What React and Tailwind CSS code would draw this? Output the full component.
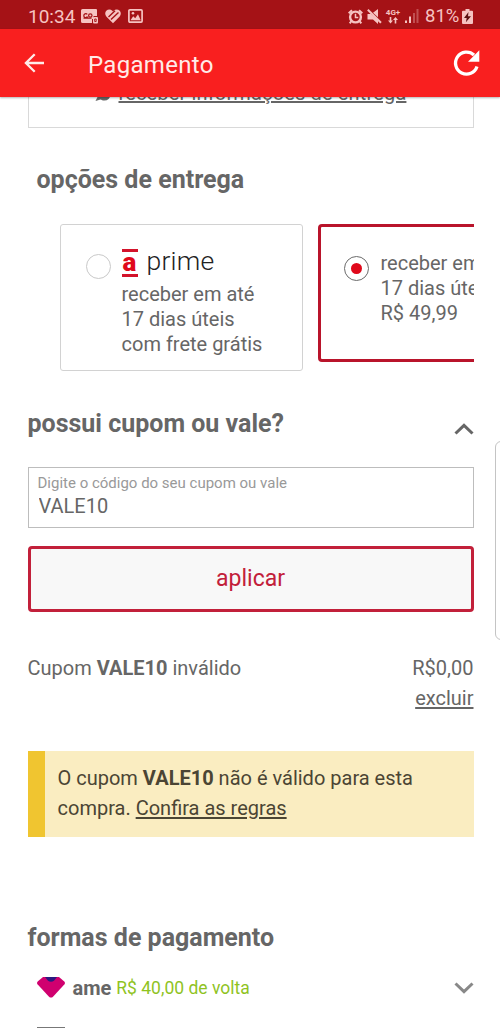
import React, { useState } from 'react';

const StatusBar = () => (
  <div className="flex h-[29px] items-center bg-[#a51216] pt-[3px] text-[#f6c3c1]">
    <span className="ml-[28px] w-[53px] text-[19px] leading-none">10:34</span>

    {/* Notification icons */}
    <svg className="h-[15px] w-[17px]" viewBox="0 0 17 15">
      <path
        fill="currentColor"
        d="M1.500 0h13.500a1 1 0 0 1 1 1v6h-3.500v3H11v4H1.500A1.500 1.500 0 0 1 0 12.500v-11A1.500 1.500 0 0 1 1.500 0z"
      />
      <rect x="12" y="8" width="5" height="6.500" rx="1" fill="currentColor" />
      <g fill="none" stroke="#a51216" strokeWidth="1.200">
        <path d="M6.300 5.300A2 2 0 1 0 6.300 8H5M2.500 9.200h8" />
        <circle cx="9.300" cy="6.500" r="1.700" />
        <path d="M13.700 10h1.500v2.500h-1.500z" strokeWidth="0.900" />
      </g>
    </svg>
    <svg className="ml-[7px] h-[15px] w-[16px]" viewBox="0 0 16 15">
      <path
        fill="currentColor"
        d="M8 14.200 1.300 7.500C-.2 5.800-.1 3.300 1.300 1.700 3 .1 5.700.1 7.300 1.700L8 2.400l.7-.7c1.600-1.600 4.300-1.600 6 0 1.400 1.600 1.500 4.100 0 5.800z"
      />
      <path stroke="#a51216" strokeWidth="1.400" fill="none" d="M3.500 8 10 1.800M6 10.500l7.500-7" />
    </svg>
    <svg className="ml-[7px] h-[14px] w-[15px]" viewBox="0 0 15 14">
      <rect x="0.900" y="0.900" width="13.200" height="12.200" rx="1" fill="none" stroke="currentColor" strokeWidth="1.700" />
      <path fill="currentColor" d="M2.500 11.200 5.200 7.300l2 1.900 2.800-4 2.700 6z" />
      <circle cx="5" cy="4.300" r="1.300" fill="currentColor" />
    </svg>

    {/* System icons */}
    <svg className="ml-auto h-[15px] w-[15px]" viewBox="0 0 15 15">
      <circle cx="7.500" cy="8" r="5.400" fill="none" stroke="currentColor" strokeWidth="2.400" />
      <path
        fill="none"
        stroke="currentColor"
        strokeWidth="2"
        d="M.7 4.300 4 1.200M14.300 4.300 11 1.200M3.500 12l-1.800 2.300M11.500 12l1.800 2.300"
      />
      <path fill="none" stroke="currentColor" strokeWidth="1.500" d="M7.500 4.800v3.700h2.800" />
    </svg>
    <svg className="ml-[4px] h-[15px] w-[15px]" viewBox="0 0 15 15">
      <path fill="currentColor" d="M.5 5H4l7 6v4l-5-4.500H.5zM6 3.800 11 0v8.300z" />
      <path stroke="currentColor" strokeWidth="2" d="m.8.800 13.200 13" />
    </svg>
    <span className="ml-[3px] flex w-[16px] flex-col items-center">
      <span className="text-[8px] font-bold leading-[8px]">4G+</span>
      <svg className="h-[7px] w-[10px]" viewBox="0 0 10 7">
        <path
          fill="currentColor"
          d="M1.700 0h1.600v3.500H5L2.500 6.500 0 3.500h1.700zM6.700 6.500h1.600V3H10L7.500 0 5 3h1.700z"
        />
      </svg>
    </span>
    <svg className="ml-[4px] h-[14px] w-[14px]" viewBox="0 0 14 14">
      <path fill="currentColor" d="M0 11.500h2V14H0zM4 7.500h2V14H4z" />
      <path fill="currentColor" opacity="0.350" d="M8 4h2v10H8zM11.500 0h2v14h-2z" />
    </svg>
    <span className="ml-[6px] w-[34px] whitespace-nowrap text-[18.500px] leading-none">81%</span>
    <svg className="ml-[3px] mr-[27px] h-[15px] w-[11px]" viewBox="0 0 11 15">
      <path fill="currentColor" d="M3.500 0h4v1.700H10a1 1 0 0 1 1 1V14a1 1 0 0 1-1 1H1a1 1 0 0 1-1-1V2.700a1 1 0 0 1 1-1h2.500z" />
      <path fill="#5a1011" d="M6.500 3 2 8.900h2.700l-.8 4.300L9 7.300H6z" />
    </svg>
  </div>
);

const Header = () => (
  <header className="relative z-10 flex h-[68px] items-center bg-[#f91f1f] text-[#ffebe8] shadow-[0_1px_2px_rgba(0,0,0,0.300)]">
    <button type="button" className="ml-[24px]" aria-label="Voltar">
      <svg className="h-[20px] w-[20px]" viewBox="0 0 20 20" fill="none" stroke="currentColor" strokeWidth="2.300">
        <path d="M20 10H2M10.700 1.200 1.900 10l8.800 8.800" />
      </svg>
    </button>
    <h1 className="ml-[44px] pt-[3px] text-[24px] leading-[30px] tracking-[0.300px]">Pagamento</h1>
    <button type="button" className="ml-auto mr-[20px] text-white" aria-label="Atualizar">
      <svg className="h-[28px] w-[28px]" viewBox="0 0 28 28">
        <path fill="none" stroke="currentColor" strokeWidth="3.300" d="M22 6A11 11 0 1 0 25 17.500" />
        <path fill="currentColor" d="M27.300 1.300v11.400H16z" />
      </svg>
    </button>
  </header>
);

const Radio = ({ checked }) => (
  <span
    className={`mt-[1px] flex size-[25px] shrink-0 items-center justify-center rounded-full border bg-white ${
      checked ? 'border-[#6b6b6b]' : 'border-[#c9c9c9]'
    }`}
  >
    {checked && <span className="size-[11px] rounded-full bg-[#e0091b]" />}
  </span>
);

const PrimeLogo = () => (
  <span className="flex h-[28px] items-center">
    <span className="flex h-[28px] w-[16px] items-center justify-center border-y-[3.500px] border-[#d3132b] text-[26px] font-black leading-none text-[#e0091b]">
      <span className="-mt-[3px]">a</span>
    </span>
    <span className="-mt-[4px] ml-[9px] text-[26.500px] font-light leading-[28px] tracking-[0.200px] text-[#222]">
      prime
    </span>
  </span>
);

const Chevron = ({ up }) => (
  <svg
    className={`h-[12px] w-[20px] ${up ? '' : 'rotate-180'}`}
    viewBox="0 0 20 12"
    fill="none"
    stroke={up ? '#666' : '#888'}
    strokeWidth="3"
  >
    <path d="M1.500 10.500 10 2.300l8.500 8.200" />
  </svg>
);

const App = () => {
  const [option, setOption] = useState('standard');
  const [coupon, setCoupon] = useState('VALE10');

  return (
    <div className="relative h-[1028px] w-[500px] overflow-hidden bg-white font-[Roboto,sans-serif] text-[20px] text-[#666]">
      <StatusBar />
      <Header />

      <main className="flex flex-col pl-[27.500px] pr-[26.500px]">
        <div className="flex h-[31px] items-start border border-t-0 border-[#d9d9d9] pl-[66px]">
          <svg className="-mt-[10px] h-[14px] w-[16px]" viewBox="0 0 16 14">
            <path fill="#666" d="M15.500 2v6a6 6 0 0 1-6 5.500c-2 0-3-.5-4-1L.5 14l2-4V2z" />
          </svg>
          <a href="#entrega" className="-mt-[16px] ml-[8px] whitespace-nowrap leading-[24px] tracking-[0.150px] underline underline-offset-1">
            receber informações de entrega
          </a>
        </div>

        {/* Delivery options */}
        <h2 className="mt-[37px] pl-[9px] text-[25px] font-bold leading-[30px]">opções de entrega</h2>
        <div className="mt-[29px] flex h-[148px] items-start gap-[15px] overflow-hidden pl-[32px] leading-[25px]">
          <div
            className="flex h-[147px] w-[243px] shrink-0 rounded-[3px] border-[1.500px] border-[#d2d2d2] pl-[25px] pt-[24px]"
            onClick={() => setOption('prime')}
          >
            <span className="mt-[4px]">
              <Radio checked={option === 'prime'} />
            </span>
            <div className="ml-[11px]">
              <PrimeLogo />
              <p className="mt-[5px]">
                receber em até
                <br />
                17 dias úteis
                <br />
                com frete grátis
              </p>
            </div>
          </div>
          <div
            className="flex h-[138px] w-[243px] shrink-0 rounded-[4px] border-[3px] border-[#b9142b] pl-[23px] pt-[24px]"
            onClick={() => setOption('standard')}
          >
            <span className="mt-[4px]">
              <Radio checked={option === 'standard'} />
            </span>
            <p className="ml-[12px]">
              receber em até
              <br />
              17 dias úteis
              <br />
              R$ 49,99
            </p>
          </div>
        </div>

        {/* Coupon */}
        <div className="mt-[37px] flex h-[30px] items-center justify-between">
          <h2 className="text-[25px] font-bold leading-[30px]">possui cupom ou vale?</h2>
          <span className="pt-[10px]">
            <Chevron up />
          </span>
        </div>
        <label className="mt-[28px] flex h-[61px] flex-col border border-[#bdbdbd] pl-[9px] pt-[5px]">
          <span className="text-[15px] leading-[20px] text-[#999]">Digite o código do seu cupom ou vale</span>
          <input
            className="h-[25px] w-full pl-[1px] text-[20px] outline-none"
            value={coupon}
            onChange={e => setCoupon(e.target.value)}
          />
        </label>
        <button
          type="button"
          className="mt-[18px] h-[66px] rounded-[4px] border-[3px] border-[#c2203a] bg-[#f8f8f8] text-[23px] text-[#c2203a]"
        >
          aplicar
        </button>

        <div className="mt-[41px] flex justify-between leading-[30px]">
          <p>
            Cupom <b>VALE10</b> inválido
          </p>
          <p className="text-right">
            R$0,00
            <br />
            <a href="#excluir" className="underline underline-offset-2">
              excluir
            </a>
          </p>
        </div>

        <div className="mt-[38px] h-[86px] border-l-[17px] border-[#f0c530] bg-[#faedc1] pl-[13px] pt-[12px] leading-[30px] text-[#4b4534]">
          O cupom <b>VALE10</b> não é válido para esta
          <br />
          compra.{' '}
          <a href="#regras" className="underline underline-offset-2">
            Confira as regras
          </a>
        </div>

        {/* Payment methods */}
        <h2 className="mt-[86px] text-[25px] font-bold leading-[30px]">formas de pagamento</h2>
        <div className="mt-[20px] flex h-[30px] items-center pl-[9px]">
          <svg className="-mt-[2px] h-[21px] w-[28px]" viewBox="0 0 28 21">
            <path
              fill="#d0006f"
              d="M6 0h16l5.300 4.500q1.200 1.200.2 2.700L16 19.700q-2 1.800-4 0L.5 7.200q-1-1.500.2-2.700z"
            />
            <path fill="#2b1a80" d="M8 0h12l-3 3.700q-3 2-6 0z" />
          </svg>
          <b className="ml-[8px]">ame</b>
          <span className="ml-[5px] text-[17.500px] text-[#8fc31f]">R$ 40,00 de volta</span>
          <span className="ml-auto">
            <Chevron />
          </span>
        </div>
        <div className="ml-[9px] mt-[24px] h-[20px] w-[28px] border-t border-[#777]" />
      </main>

      {/* Edge panel handle */}
      <div className="absolute left-[495px] top-[441px] h-[199px] w-[12px] rounded-[6px] border border-[#c4c4c4] bg-white" />
    </div>
  );
};

export default App;
